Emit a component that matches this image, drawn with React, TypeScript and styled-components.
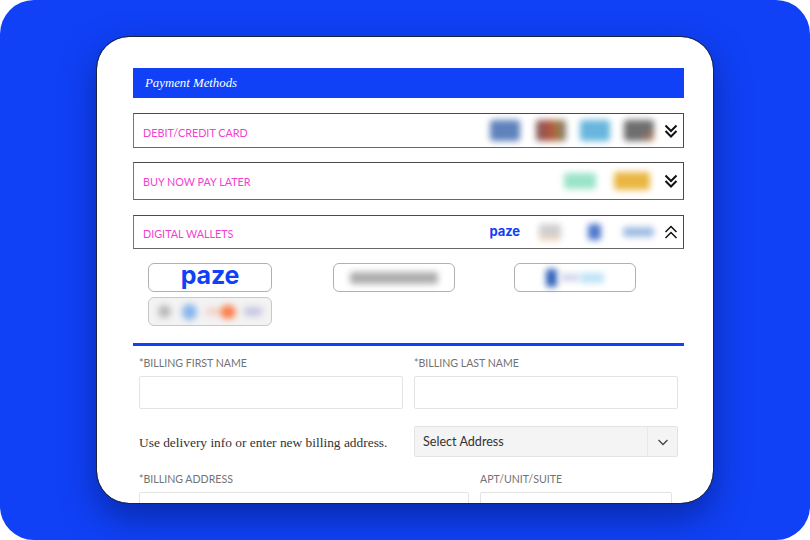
import React from 'react';
import styled, { createGlobalStyle } from 'styled-components';

const GlobalStyle = createGlobalStyle`
    html, body {
        margin: 0;
        padding: 0;
        background: #fff;
    }
`;

const Stage = styled.div`
    width: 810px;
    height: 540px;
    box-sizing: border-box;
    padding: 37px 97px;
    background: #1041f6;
    border-radius: 34px;
    overflow: hidden;
`;

const Card = styled.div`
    box-sizing: border-box;
    width: 616px;
    height: 466px;
    padding: 31px 29px 0 36px;
    background: #fff;
    border-radius: 32px;
    outline: 1px solid #1c2540;
    box-shadow: 0 14px 34px rgba(4, 20, 90, 0.5);
    overflow: hidden;
`;

const Title = styled.div`
    height: 30px;
    padding: 1px 0 0 12px;
    box-sizing: border-box;
    display: flex;
    align-items: center;
    background: #1041f6;
    color: #fff;
    font: italic 12.8px "Liberation Serif", serif;
`;

const Row = styled.div<{ $height: number; $top: number }>`
    box-sizing: border-box;
    height: ${p => p.$height}px;
    margin-top: ${p => p.$top}px;
    padding: 3px 4px 0 9px;
    display: flex;
    align-items: center;
    border: 1px solid #4a4a4a;
    border-left-color: #777;
    border-bottom-color: #666;
`;

const RowLabel = styled.div<{ $lift?: number }>`
    flex: 1;
    margin-top: ${p => p.$lift ?? 0}px;
    color: #f23fd0;
    font: 10.8px Lato, sans-serif;
`;

const Chip = styled.div<{ $width: number; $height: number; $right: number; $color: string; $blur?: number }>`
    width: ${p => p.$width}px;
    height: ${p => p.$height}px;
    margin-right: ${p => p.$right}px;
    margin-top: -3px;
    background: ${p => p.$color};
    border-radius: 3px;
    filter: blur(${p => p.$blur ?? 3}px);
`;

const Chevron = styled.svg`
    width: 16px;
    height: 16px;
    margin-top: -3px;
    color: #111;
    flex: none;
`;

const SmallPaze = styled.div`
    margin: -4px 19px 0 0;
    color: #1041f6;
    font: 700 13px/1.2 Inter, sans-serif;
    letter-spacing: -0.1px;
`;

const Wallets = styled.div`
    margin: 14px 0 0 15px;
    display: grid;
    grid-template-columns: 185px 181px 122px;
    row-gap: 5px;
`;

const WalletButton = styled.div<{ $faded?: boolean; $wide?: boolean }>`
    box-sizing: border-box;
    width: ${p => (p.$wide ? 124 : 122)}px;
    height: 29px;
    display: flex;
    align-items: center;
    justify-content: center;
    border: 1px solid ${p => (p.$faded ? '#c8c8c8' : '#b0b0b0')};
    border-radius: 6px;
    background: ${p => (p.$faded ? '#f3f3f3' : '#fff')};
`;

const BigPaze = styled.span`
    margin-top: -5px;
    color: #1041f6;
    font: 700 25px/26px Inter, sans-serif;
    letter-spacing: -0.2px;
`;

const Blob = styled.div<{ $width: number; $height: number; $color: string; $blur?: number; $gap?: number; $round?: boolean }>`
    width: ${p => p.$width}px;
    height: ${p => p.$height}px;
    margin-right: ${p => p.$gap ?? 0}px;
    background: ${p => p.$color};
    border-radius: ${p => (p.$round ? '50%' : '3px')};
    filter: blur(${p => p.$blur ?? 3}px);
    flex: none;
`;

const Divider = styled.div`
    height: 3px;
    margin-top: 17px;
    background: #1041f6;
`;

const Form = styled.div`
    padding: 10px 6px 0 6px;
    display: grid;
    grid-template-columns: 264px 264px;
    column-gap: 11px;
`;

const FieldLabel = styled.div`
    height: 20px;
    color: #737373;
    font: 10.6px/14px Lato, sans-serif;
`;

const Input = styled.div`
    box-sizing: border-box;
    height: 33px;
    background: #fff;
    border: 1px solid #e3e3e3;
    border-radius: 2px;
`;

const HelpText = styled.div`
    height: 31px;
    margin-top: 17px;
    padding-top: 2px;
    box-sizing: border-box;
    display: flex;
    align-items: center;
    color: #333;
    font: 13.4px "Liberation Serif", serif;
`;

const Select = styled.div`
    box-sizing: border-box;
    height: 31px;
    margin-top: 17px;
    display: flex;
    align-items: center;
    background: #f4f4f4;
    border: 1px solid #e3e3e3;
    border-radius: 2px;
    color: #333;
    font: 12.6px Lato, sans-serif;
`;

const SelectValue = styled.div`
    flex: 1;
    padding-left: 8px;
`;

const SelectArrow = styled.div`
    width: 29px;
    height: 100%;
    display: flex;
    align-items: center;
    justify-content: center;
    border-left: 1px solid #e8e8e8;
    color: #444;
`;

const AddressRow = styled.div`
    margin-top: 15px;
    padding-left: 6px;
    display: grid;
    grid-template-columns: 330px 192px;
    column-gap: 11px;
`;

function DoubleChevron({ up }: { up?: boolean }) {
    return (
        <Chevron viewBox="0 0 16 16" fill="none" stroke="currentColor" strokeWidth={up ? 1.5 : 2}>
            {up ? (
                <path d="M2.500 8 8 2.500 13.500 8M2.500 14 8 8.500 13.500 14" />
            ) : (
                <path d="M2.500 2.500 8 8 13.500 2.500M2.500 8 8 13.500 13.500 8" />
            )}
        </Chevron>
    );
}

export default function App() {
    return (
        <Stage>
            <GlobalStyle />
            <Card>
                <Title>Payment Methods</Title>
                <Row $height={35} $top={15}>
                    <RowLabel $lift={1}>DEBIT/CREDIT CARD</RowLabel>
                    <Chip $width={30} $height={21} $right={16} $color="#5f82bd" />
                    <Chip $width={30} $height={21} $right={14} $color="linear-gradient(90deg, #80605f, #b2503f 45%, #a4783f 70%, #7d7d78)" />
                    <Chip $width={30} $height={21} $right={14} $color="#68b6dd" />
                    <Chip $width={30} $height={21} $right={9} $color="linear-gradient(135deg, #6e6e6e 60%, #8a7466 80%, #e0855c)" />
                    <DoubleChevron />
                </Row>
                <Row $height={38} $top={14}>
                    <RowLabel $lift={-3}>BUY NOW PAY LATER</RowLabel>
                    <Chip $width={32} $height={16} $right={18} $color="#9be3c9" />
                    <Chip $width={36} $height={18} $right={13} $color="#eab643" />
                    <DoubleChevron />
                </Row>
                <Row $height={34} $top={15}>
                    <RowLabel>DIGITAL WALLETS</RowLabel>
                    <SmallPaze>paze</SmallPaze>
                    <Chip $width={22} $height={17} $right={27} $color="linear-gradient(180deg, #cfcfcf 60%, #fddcb8)" />
                    <Chip $width={13} $height={16} $right={22} $color="#4f78cc" />
                    <Chip $width={31} $height={10} $right={9} $color="#a0bde3" />
                    <DoubleChevron up />
                </Row>
                <Wallets>
                    <WalletButton $wide>
                        <BigPaze>paze</BigPaze>
                    </WalletButton>
                    <WalletButton>
                        <Blob $width={88} $height={12} $color="#adadad" />
                    </WalletButton>
                    <WalletButton>
                        <Blob $width={11} $height={18} $color="#2f62b8" $gap={3} />
                        <Blob $width={20} $height={7} $color="#cfd2ea" />
                        <Blob $width={24} $height={10} $color="#bce2f5" />
                    </WalletButton>
                    <WalletButton $faded $wide>
                        <Blob $width={13} $height={13} $color="#b8b8b8" $round $gap={11} />
                        <Blob $width={15} $height={16} $color="#86b5ee" $round $gap={9} />
                        <Blob $width={14} $height={7} $color="#f0cfc5" />
                        <Blob $width={16} $height={14} $color="#fb7f4c" $round $gap={8} />
                        <Blob $width={18} $height={9} $color="#c6c6e2" />
                    </WalletButton>
                </Wallets>
                <Divider />
                <Form>
                    <div>
                        <FieldLabel>*BILLING FIRST NAME</FieldLabel>
                        <Input />
                    </div>
                    <div>
                        <FieldLabel>*BILLING LAST NAME</FieldLabel>
                        <Input />
                    </div>
                    <HelpText>Use delivery info or enter new billing address.</HelpText>
                    <Select>
                        <SelectValue>Select Address</SelectValue>
                        <SelectArrow>
                            <svg width="12" height="12" viewBox="0 0 12 12" fill="none" stroke="currentColor" strokeWidth="1.300">
                                <path d="M1.500 4 6 8.500 10.500 4" />
                            </svg>
                        </SelectArrow>
                    </Select>
                </Form>
                <AddressRow>
                    <div>
                        <FieldLabel>*BILLING ADDRESS</FieldLabel>
                        <Input />
                    </div>
                    <div>
                        <FieldLabel>APT/UNIT/SUITE</FieldLabel>
                        <Input />
                    </div>
                </AddressRow>
            </Card>
        </Stage>
    );
}
